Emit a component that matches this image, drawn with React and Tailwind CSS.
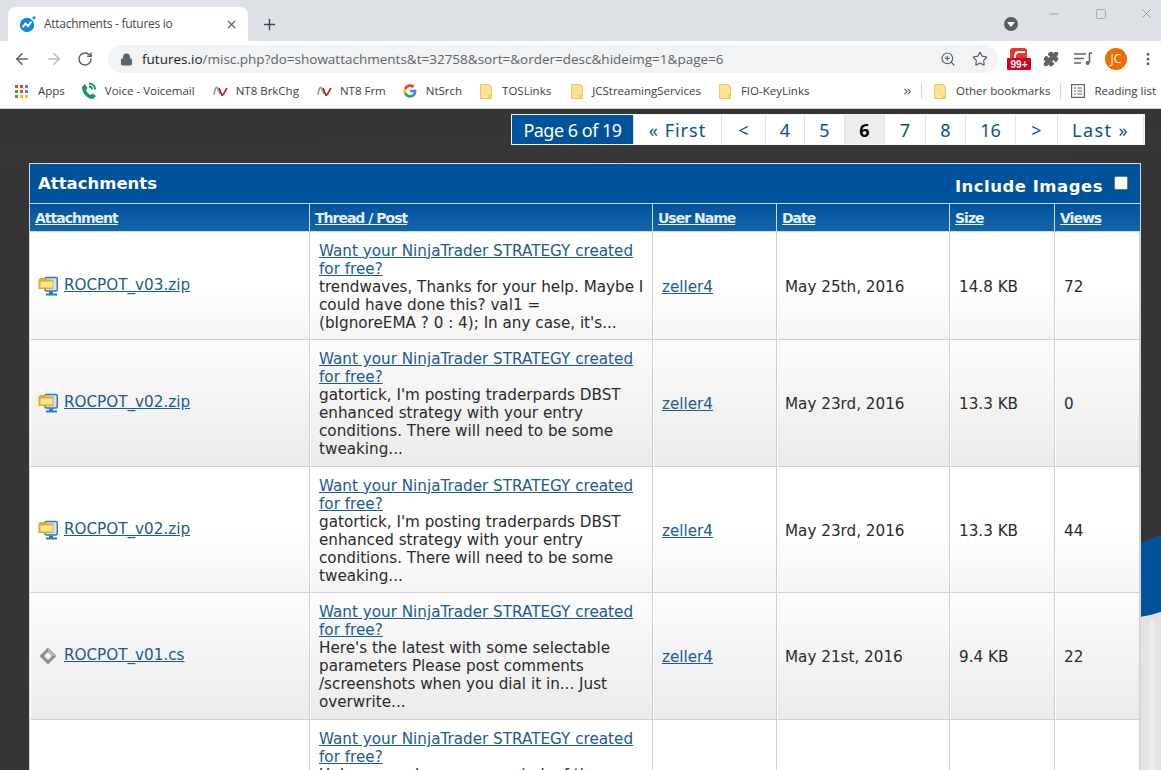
import React from 'react';
import { ArrowLeft, ArrowRight, RotateCw, Lock, ZoomIn, Star, Puzzle, X, Plus, Minus, Square, ChevronsRight, MoreVertical } from 'lucide-react';

const pages = [
  { label: 'Page 6 of 19', w: 'w-[122px]', cls: 'bg-[#00529b] text-white tracking-[-.5px]' },
  { label: '« First', w: 'w-[88px]', cls: 'text-[#0e4f8e] tracking-[1px]' },
  { label: '<', w: 'w-[44px]' },
  { label: '4', w: 'w-[39px]' },
  { label: '5', w: 'w-[40px]' },
  { label: '6', w: 'w-[40px]', cls: 'bg-[#eeeeee] text-black font-bold' },
  { label: '7', w: 'w-[41px]' },
  { label: '8', w: 'w-[40px]' },
  { label: '16', w: 'w-[50px]' },
  { label: '>', w: 'w-[42px]' },
  { label: 'Last »', w: 'w-[86px]', cls: 'text-[#0e4f8e] tracking-[1.400px]' },
];

const headers = [
  { label: 'Attachment', w: 'w-[280px]' },
  { label: 'Thread / Post', w: 'w-[343px]' },
  { label: 'User Name', w: 'w-[124px]' },
  { label: 'Date', w: 'w-[173px]' },
  { label: 'Size', w: 'w-[105px]' },
  { label: 'Views', w: 'w-[85px]' },
];

const rows = [
  {
    file: 'ROCPOT_v03.zip', icon: 'zip', odd: true, h: 'h-[108px]', date: 'May 25th, 2016', size: '14.8 KB', views: '72',
    lines: ['trendwaves, Thanks for your help. Maybe I', 'could have done this? val1 =', "(bIgnoreEMA ? 0 : 4); In any case, it's..."],
  },
  {
    file: 'ROCPOT_v02.zip', icon: 'zip', h: 'h-[127px]', date: 'May 23rd, 2016', size: '13.3 KB', views: '0',
    lines: ["gatortick, I'm posting traderpards DBST", 'enhanced strategy with your entry', 'conditions. There will need to be some', 'tweaking...'],
  },
  {
    file: 'ROCPOT_v02.zip', icon: 'zip', odd: true, h: 'h-[126px]', date: 'May 23rd, 2016', size: '13.3 KB', views: '44',
    lines: ["gatortick, I'm posting traderpards DBST", 'enhanced strategy with your entry', 'conditions. There will need to be some', 'tweaking...'],
  },
  {
    file: 'ROCPOT_v01.cs', icon: 'cs', h: 'h-[127px]', date: 'May 21st, 2016', size: '9.4 KB', views: '22',
    lines: ["Here's the latest with some selectable", 'parameters Please post comments', '/screenshots when you dial it in... Just', 'overwrite...'],
  },
];

function Favicon() {
  return (
    <svg width="18" height="18" viewBox="0 0 18 18">
      <circle cx="8" cy="10" r="7.2" fill="#1387dc" />
      <path d="M3.500 12.500 L6.500 8.500 L9 11 L12.500 6.500" stroke="#fff" strokeWidth="2" fill="none" />
      <circle cx="15" cy="2.800" r="1.500" fill="#1387dc" />
    </svg>
  );
}

function AppsIcon() {
  const colors = ['#ea4335', '#ea4335', '#4285f4', '#34a853', '#ea4335', '#4285f4', '#34a853', '#fbbc05', '#fbbc05'];
  return (
    <div className="grid grid-cols-3 gap-[2px] w-[13px] h-[13px]">
      {colors.map((c, i) => (
        <span key={i} className="w-[3px] h-[3px]" style={{ background: c }} />
      ))}
    </div>
  );
}

function PhoneIcon() {
  return (
    <svg width="16" height="18" viewBox="0 0 16 18">
      <path d="M1 5 L4 2 L6.500 6 L5 8 C6 10.500 7.500 12 9.500 13 L11.500 11.500 L15 14 L12 17 C6 17 1 11 1 5 Z" fill="#0f9d58" />
      <path d="M8 1.500 C11.500 1.500 14 4 14 7.500 M8 4.500 C9.800 4.500 11 5.800 11 7.500" stroke="#0f9d58" strokeWidth="2" fill="none" />
    </svg>
  );
}

function NtIcon() {
  return (
    <svg width="15" height="12" viewBox="0 0 15 12">
      <path d="M1 10 C2 2 4 1 5 4 L7 9" stroke="#9a9a9a" strokeWidth="1.600" fill="none" />
      <path d="M6 3 L9 10.500 C10 11 12 6 14 3" stroke="#a3262a" strokeWidth="1.600" fill="none" />
    </svg>
  );
}

function GoogleIcon() {
  return (
    <svg width="14" height="14" viewBox="0 0 48 48">
      <path fill="#4285f4" d="M46 24.500c0-1.600-.1-3.100-.4-4.500H24v8.500h12.400c-.5 2.900-2.100 5.300-4.600 6.900v5.700h7.400C43.500 36.700 46 31.100 46 24.500z" />
      <path fill="#34a853" d="M24 47c6.200 0 11.400-2 15.200-5.500l-7.400-5.700c-2.100 1.400-4.700 2.200-7.800 2.200-6 0-11.100-4-12.900-9.500H3.500v5.900C7.300 41.900 15 47 24 47z" />
      <path fill="#fbbc05" d="M11.100 28.500c-.5-1.400-.7-2.900-.7-4.500s.3-3.100.7-4.500v-5.900H3.500C2 16.700 1 20.200 1 24s1 7.300 2.500 10.400l7.600-5.900z" />
      <path fill="#ea4335" d="M24 10c3.400 0 6.400 1.200 8.800 3.400l6.600-6.600C35.400 3.200 30.200 1 24 1 15 1 7.300 6.100 3.500 13.600l7.600 5.900C12.900 14 18 10 24 10z" />
    </svg>
  );
}

function FolderIcon() {
  return (
    <svg width="12" height="15" viewBox="0 0 12 15">
      <path d="M.5.500H9.500L11.500 3V14.500H.5Z" fill="#fde293" stroke="#e8c868" />
      <path d="M9 14.500V11.500H11.500" fill="#f6cf5e" stroke="#e8c868" />
    </svg>
  );
}

function ExtensionBadge() {
  return (
    <div className="relative w-[24px] h-[24px]">
      <div className="absolute left-[3px] top-[1px] w-[17px] h-[14px] bg-[#e03b2d] rounded-t-[3px]">
        <div className="absolute left-[4px] top-[3px] w-[11px] h-[9px] border-t-[2px] border-l-[2px] border-white rounded-tl-[5px]" />
      </div>
      <div className="absolute left-0 top-[11px] w-[24px] h-[12px] bg-[#d5001c] rounded-[1px] text-white text-[10px] font-bold leading-[13px] text-center [font-family:'Liberation_Sans',sans-serif]">
        99+
      </div>
    </div>
  );
}

function MediaIcon() {
  return (
    <svg width="18" height="14" viewBox="0 0 18 14">
      <path d="M0 2H12M0 6.500H10M0 11H7" stroke="#5f6368" strokeWidth="1.400" />
      <path d="M15.500 1V10.500" stroke="#5f6368" strokeWidth="1.600" />
      <path d="M15.500 1H18" stroke="#5f6368" strokeWidth="1.600" />
      <circle cx="13.600" cy="11" r="2" fill="#5f6368" />
    </svg>
  );
}

function ReadingIcon() {
  return (
    <svg width="14" height="14" viewBox="0 0 14 14" fill="none" stroke="#5f6368" strokeWidth="1.200">
      <rect x=".6" y=".6" width="12.800" height="12.800" />
      <path d="M3 4H5M6.500 4H11M3 7H5M6.500 7H11M3 10H5M6.500 10H11" />
    </svg>
  );
}

function ZipIcon() {
  return (
    <svg width="20" height="20" viewBox="0 0 20 20" className="shrink-0">
      <rect x="7" y="1.500" width="12.300" height="13.500" rx="1.500" fill="#cfe4f7" stroke="#2f78bd" strokeWidth="1.500" />
      <path d="M11 15.500V17.500H8V19.500H19V17.500H15V15.500Z" fill="#2f78bd" />
      <path d="M.5 4C.5 3 1.500 2 3 2H7L8.500 3.500H15.500V13H.5Z" fill="#e8a92a" />
      <rect x="2.500" y="5.500" width="12" height="6" fill="#fde989" />
    </svg>
  );
}

function CsIcon() {
  return (
    <svg width="20" height="20" viewBox="0 0 20 20" className="shrink-0">
      <path d="M10 1.500L18.500 10L10 18.500L1.500 10Z" fill="#8f8f8f" />
      <path d="M10 6L14 10L10 14L6 10Z" fill="#f4f4f4" />
      <path d="M10 1.500L18.500 10L14 10L10 6Z" fill="#b4b4b4" />
    </svg>
  );
}

function Bookmark({ icon, label, left }) {
  return (
    <div className={`flex items-center shrink-0 ${left}`}>
      {icon}
      <span>{label}</span>
    </div>
  );
}

function ChromeBar() {
  return (
    <div className="[font-family:'Open_Sans',sans-serif] shrink-0">
      <div className="h-[41px] bg-[#dee1e6] flex items-end pl-[8px]">
        <div className="w-[240px] h-[34px] bg-white rounded-t-[8px] flex items-center pl-[11px] pr-[10px] gap-[7px] text-[12px] text-[#45474a]">
          <Favicon />
          <span className="flex-1 tracking-[-.27px]">Attachments - futures io</span>
          <X size={13} strokeWidth={2.200} className="text-[#5f6368]" />
        </div>
        <Plus size={17} strokeWidth={2} className="text-[#45474a] ml-[13px] mb-[8px]" />
        <div className="flex-1" />
        <div className="w-[14px] h-[14px] mb-[10px] mr-[29px] rounded-full bg-[#5a5d61] flex items-center justify-center">
          <div className="border-x-[4px] border-x-transparent border-t-[5px] border-t-white" />
        </div>
        <div className="flex items-center gap-[33px] self-start pt-[6px] pr-[7px] text-[#71757a]">
          <Minus size={14} strokeWidth={1} />
          <Square size={12} strokeWidth={1} className="ml-[1px]" />
          <X size={15} strokeWidth={1} className="-ml-[1px]" />
        </div>
      </div>

      <div className="h-[36px] bg-white flex items-center">
        <div className="w-[108px] flex items-center pl-[13px] gap-[14px] shrink-0">
          <ArrowLeft size={18} strokeWidth={2.200} className="text-[#5f6368]" />
          <ArrowRight size={18} strokeWidth={2.200} className="text-[#babcbe]" />
          <RotateCw size={16} strokeWidth={2.200} className="text-[#5f6368]" />
        </div>
        <div className="w-[890px] h-[28px] rounded-full bg-[#f1f3f4] flex items-center pl-[12px] pr-[10px] shrink-0">
          <Lock size={13} strokeWidth={2.500} className="text-[#5f6368] mr-[9px]" fill="#5f6368" />
          <span className="flex-1 text-[13.500px] text-[#5f6368]">
            <span className="text-[#202124]">futures.io</span>/misc.php?do=showattachments&amp;t=32758&amp;sort=&amp;order=desc&amp;hideimg=1&amp;page=6
          </span>
          <ZoomIn size={16} strokeWidth={1.800} className="text-[#5f6368] mr-[16px]" />
          <Star size={16} strokeWidth={1.800} className="text-[#5f6368]" />
        </div>
        <div className="flex items-center ml-[9px]">
          <ExtensionBadge />
          <Puzzle size={16} className="text-[#5f6368] ml-[12px]" fill="#5f6368" />
          <div className="ml-[15px]"><MediaIcon /></div>
          <div className="ml-[13px] w-[22px] h-[22px] rounded-full bg-[#ef6c00] text-white text-[12px] flex items-center justify-center">JC</div>
          <MoreVertical size={16} strokeWidth={2.500} className="text-[#5f6368] ml-[13px]" />
        </div>
      </div>

      <div className="h-[32px] bg-white border-b-[1px] border-[#cfcfcf] flex items-center text-[11.500px] text-[#3c4043] pb-[3px]">
        <Bookmark left="ml-[15px]" icon={<div className="mr-[10px]"><AppsIcon /></div>} label="Apps" />
        <Bookmark left="ml-[16px]" icon={<div className="mr-[8px]"><PhoneIcon /></div>} label="Voice - Voicemail" />
        <Bookmark left="ml-[18px]" icon={<div className="mr-[8px]"><NtIcon /></div>} label="NT8 BrkChg" />
        <Bookmark left="ml-[18px]" icon={<div className="mr-[8px]"><NtIcon /></div>} label="NT8 Frm" />
        <Bookmark left="ml-[17px]" icon={<div className="mr-[9px]"><GoogleIcon /></div>} label="NtSrch" />
        <Bookmark left="ml-[18px]" icon={<div className="mr-[10px]"><FolderIcon /></div>} label="TOSLinks" />
        <Bookmark left="ml-[20px]" icon={<div className="mr-[9px]"><FolderIcon /></div>} label="JCStreamingServices" />
        <Bookmark left="ml-[18px]" icon={<div className="mr-[10px]"><FolderIcon /></div>} label="FIO-KeyLinks" />
        <div className="flex-1" />
        <ChevronsRight size={11} strokeWidth={2.500} className="text-[#5f6368] mr-[8px]" />
        <div className="w-[1px] h-[16px] bg-[#d5d7da] mr-[12px]" />
        <Bookmark left="" icon={<div className="mr-[10px]"><FolderIcon /></div>} label="Other bookmarks" />
        <div className="w-[1px] h-[16px] bg-[#d5d7da] mx-[10px]" />
        <Bookmark left="mr-[5px]" icon={<div className="mr-[9px]"><ReadingIcon /></div>} label="Reading list" />
      </div>
    </div>
  );
}

function Backdrop() {
  return (
    <svg className="absolute inset-0 w-full h-full" viewBox="0 0 1161 660" preserveAspectRatio="none">
      <rect width="1161" height="660" fill="#353535" />
      <path d="M0 62 L1161 45 L1161 20 L0 36Z" fill="#3a3a3a" opacity=".35" />
      <path d="M1141 433 C1148 431 1155 428 1161 425 V502 C1155 504 1148 506 1141 507Z" fill="#00529b" />
      <path d="M1141 507 C1148 506 1155 504 1161 502 V660 H1141Z" fill="#e2e2e2" />
      <path d="M1152 510 V660" stroke="#f0f0f0" strokeWidth="5" opacity=".8" />
    </svg>
  );
}

function Row({ row }) {
  const bg = row.odd
    ? 'bg-gradient-to-b from-white from-50% to-[#f4f4f4]'
    : 'bg-gradient-to-b from-[#fcfcfc] to-[#ebebeb]';
  const cell = `border-r-[1px] border-b-[1px] border-[#d0d0d0] border-l-[1px] border-l-white ${bg}`;
  return (
    <div className={`flex ${row.h}`}>
      <div className={`w-[280px] pl-[7px] gap-[6px] flex items-center ${cell}`}>
        {row.icon === 'zip' ? <ZipIcon /> : <CsIcon />}
        <a className="underline text-[#1c5a90] -mt-[1px]">{row.file}</a>
      </div>
      <div className={`w-[343px] pl-[8px] pt-[2px] flex flex-col justify-center leading-[18px] ${cell}`}>
        <a className="underline text-[#1c5a90] block">Want your NinjaTrader STRATEGY created</a>
        <a className="underline text-[#1c5a90] block">for free?</a>
        {row.lines.map((l) => (
          <div key={l} className="text-[#2a2a2a]">{l}</div>
        ))}
      </div>
      <div className={`w-[124px] pl-[8px] pt-[3px] flex items-center ${cell}`}>
        <a className="underline text-[#1c5a90]">zeller4</a>
      </div>
      <div className={`w-[173px] pl-[7px] pt-[3px] flex items-center ${cell}`}>{row.date}</div>
      <div className={`w-[105px] pl-[8px] pt-[3px] flex items-center ${cell}`}>{row.size}</div>
      <div className={`w-[85px] pl-[8px] pt-[3px] flex items-center ${cell}`}>{row.views}</div>
    </div>
  );
}

function LastRow() {
  const cell = 'border-r-[1px] border-[#d0d0d0] border-l-[1px] border-l-white bg-white';
  return (
    <div className="flex h-[60px] leading-[18px]">
      <div className={`w-[280px] ${cell}`} />
      <div className={`w-[343px] pl-[8px] pt-[10px] ${cell}`}>
        <a className="underline text-[#1c5a90] block">Want your NinjaTrader STRATEGY created</a>
        <a className="underline text-[#1c5a90] block">for free?</a>
        <div className="text-[#2a2a2a]">Unless you change your mind, of the</div>
      </div>
      <div className={`w-[124px] ${cell}`} />
      <div className={`w-[173px] ${cell}`} />
      <div className={`w-[105px] ${cell}`} />
      <div className={`w-[85px] ${cell}`} />
    </div>
  );
}

export default function App() {
  return (
    <div className="h-[770px] overflow-hidden flex flex-col">
      <ChromeBar />
      <div className="relative flex-1 overflow-hidden">
        <Backdrop />
        <div className="relative">
          <div className="flex justify-end pt-[5px] pr-[16px] text-[18px] [font-family:'Noto_Sans',sans-serif]">
            <div className="flex border-[1px] border-[#f4f4f4] bg-white h-[31px]">
              {pages.map((p) => (
                <div
                  key={p.label}
                  className={`${p.w} ${p.cls || 'text-[#0e4f8e]'} border-r-[1px] border-[#e2e2e2] flex items-center justify-center leading-none shrink-0`}
                >
                  {p.label}
                </div>
              ))}
            </div>
          </div>

          <div className="mt-[18px] ml-[29px] w-[1112px] border-[1px] border-[#cfdbe6] [font-family:'DejaVu_Sans',Verdana,sans-serif] text-[15.200px] text-[#2a2a2a]">
            <div className="h-[40px] bg-[#00529b] border-b-[1px] border-[#cfdbe6] flex items-center justify-between text-white font-bold pl-[8px] pr-[12px]">
              <span className="text-[16.500px] mt-[1px]">Attachments</span>
              <div className="flex items-center gap-[11px] mt-[7px]">
                <span className="text-[16.500px] tracking-[.5px]">Include Images</span>
                <input type="checkbox" className="w-[14px] h-[14px] appearance-none bg-white rounded-[2px] border-[1px] border-[#777] -mt-[8px]" />
              </div>
            </div>
            <div className="flex h-[28px] bg-gradient-to-b from-[#00529b] to-[#1565ad] border-b-[1px] border-[#cfdbe6] font-bold text-white">
              {headers.map((h) => (
                <div key={h.label} className={`${h.w} border-r-[1px] border-[#cfdbe6] flex items-center pl-[5px] last:border-r-0`}>
                  <a className="underline text-[#e6f0fa] text-[14px] tracking-[-1px] mt-[1px]">{h.label}</a>
                </div>
              ))}
            </div>
            {rows.map((r) => (
              <Row key={r.h + r.views} row={r} />
            ))}
            <LastRow />
          </div>
        </div>
      </div>
    </div>
  );
}
